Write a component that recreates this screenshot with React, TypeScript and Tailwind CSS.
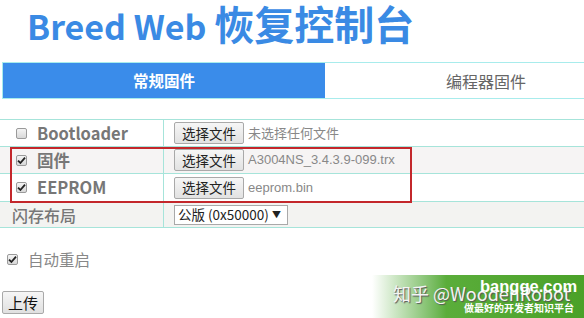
function Box({ checked }: { checked?: boolean }) {
  return (
    <span className="flex h-[11px] w-[11px] shrink-0 items-center justify-center rounded-[2px] border border-[#9a9a9a] bg-gradient-to-b from-[#f4f4f4] to-[#d8d8d8]">
      {checked && (
        <svg width="9" height="9" viewBox="0 0 9 9">
          <path d="M1 4.6 L3.4 7 L8 1.6" fill="none" stroke="#222" strokeWidth="1.8" />
        </svg>
      )}
    </span>
  );
}

function FileBtn() {
  return (
    <span className="flex h-[22px] w-[70px] items-center justify-center rounded-[2px] border border-[#a9a9a9] bg-gradient-to-b from-[#f6f6f6] to-[#e2e2e2] text-[13.5px] text-[#222]">
      选择文件
    </span>
  );
}

const label = "text-[16.5px] font-bold text-[#777]";
const file = "font-['Liberation_Sans','Noto_Sans_CJK_SC',sans-serif] text-[13px] text-[#888]";

export default function App() {
  return (
    <div className="relative h-[318px] w-[584px] overflow-hidden bg-white font-['Noto_Sans_CJK_SC',sans-serif]">
      {/* Title */}
      <h1 className="flex h-[62px] items-baseline whitespace-nowrap pl-[27px] pt-[1px] font-bold leading-[44px] text-[#3a8ae4]">
        <span className="text-[34px]">Breed Web&nbsp;</span>
        <span className="text-[40px]">恢复控制台</span>
      </h1>

      {/* Tabs */}
      <div className="ml-[2px] flex h-[37px] w-[645px] border-y border-[#a8ecec]">
        <div className="flex w-[323px] items-center justify-center border-l border-[#a8ecec] bg-[#3a8cea] text-[15.5px] font-bold text-white">
          常规固件
        </div>
        <div className="flex flex-1 items-center justify-center text-[16px] text-[#666]">
          编程器固件
        </div>
      </div>

      {/* Table */}
      <div className="mt-[20px] border-t border-[#a6e4da]">
        <div className="flex h-[27px] border-b border-[#a6e4da]">
          <div className="flex w-[164px] items-center gap-[10px] border-r border-[#a6e4da] pl-[16px]">
            <Box />
            <span className={label}>Bootloader</span>
          </div>
          <div className="flex items-center gap-[4px] pl-[10px]">
            <FileBtn />
            <span className="text-[13px] text-[#888]">未选择任何文件</span>
          </div>
        </div>
        <div className="flex h-[27px] border-b border-[#a6e4da] bg-[#f6f4f4]">
          <div className="flex w-[164px] items-center gap-[10px] border-r border-[#a6e4da] pl-[16px]">
            <Box checked />
            <span className={label}>固件</span>
          </div>
          <div className="flex items-center gap-[4px] pl-[10px]">
            <FileBtn />
            <span className={file}>A3004NS_3.4.3.9-099.trx</span>
          </div>
        </div>
        <div className="flex h-[28px] border-b border-[#a6e4da]">
          <div className="flex w-[164px] items-center gap-[10px] border-r border-[#a6e4da] pl-[16px]">
            <Box checked />
            <span className={label}>EEPROM</span>
          </div>
          <div className="flex items-center gap-[4px] pl-[10px]">
            <FileBtn />
            <span className={file}>eeprom.bin</span>
          </div>
        </div>
        <div className="flex h-[26px] border-b border-[#a6e4da] bg-[#f3f3f1]">
          <div className="flex w-[164px] items-center border-r border-[#a6e4da] pl-[12px] text-[16px] font-medium text-[#777]">
            闪存布局
          </div>
          <div className="flex items-center pl-[10px]">
            <span className="flex h-[20px] w-[114px] items-center justify-between border border-[#a9a9a9] bg-white pl-[3px] pr-[6px] text-[13.5px] text-[#222]">
              <span>公版 (0x50000)</span>
              <span className="text-[9px]">▼</span>
            </span>
          </div>
        </div>
      </div>

      {/* Red highlight annotation */}
      <div className="absolute left-[10px] top-[147px] h-[56px] w-[402px] border-2 border-[#c3272b]" />

      {/* Auto reboot */}
      <div className="mt-[20px] flex items-center gap-[10px] pl-[7px]">
        <Box checked />
        <span className="text-[15.5px] text-[#888]">自动重启</span>
      </div>

      <button className="ml-[2px] mt-[20px] flex h-[23px] w-[42px] items-center justify-center rounded-[2px] border border-[#a9a9a9] bg-gradient-to-b from-[#f6f6f6] to-[#e0e0e0] text-[15px] text-[#111]">
        上传
      </button>

      {/* Watermark */}
      <div className="absolute bottom-0 right-0 h-[43px] w-[212px] whitespace-nowrap bg-gradient-to-r from-white via-[#5aad3a] via-35% to-[#4aa128]">
        <span className="absolute left-[21px] top-[6px] text-[18px] leading-[24px] text-[#f4f4f4] [text-shadow:1px_1px_1px_#555]">
          知乎 @WoodenRobot
        </span>
        <span className="absolute left-[108px] top-[0px] font-['Liberation_Sans',sans-serif] text-[16.5px] font-bold leading-[22px] text-white">
          bangge.com
        </span>
        <span className="absolute left-[92px] top-[25px] text-[10px] font-bold leading-[16px] text-white">
          做最好的开发者知识平台
        </span>
      </div>
    </div>
  );
}
